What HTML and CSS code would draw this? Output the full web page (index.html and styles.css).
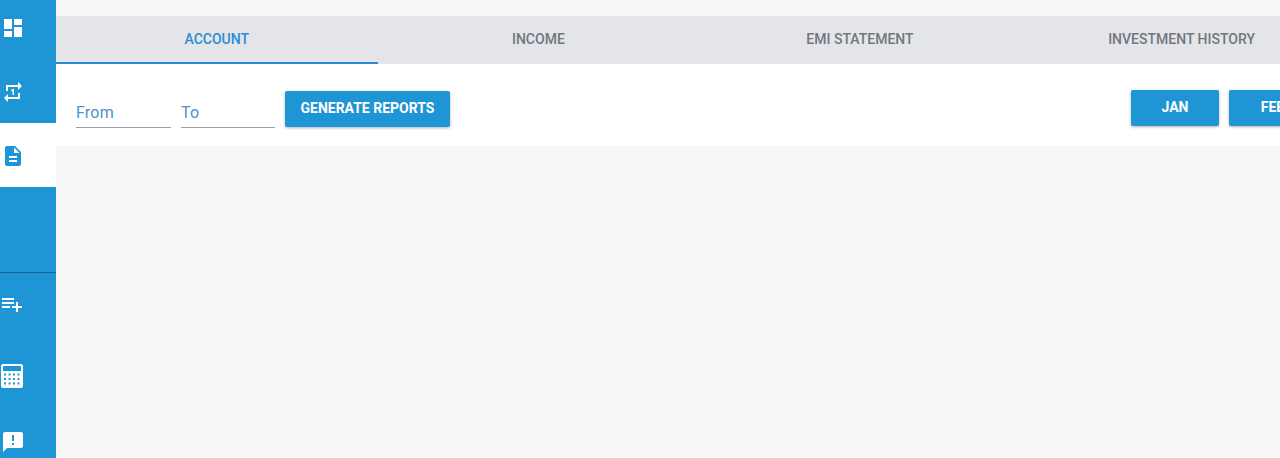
FILE: index.html
```html
<!DOCTYPE html>
<html lang="en">
<head>
    <meta charset="UTF-8">
    <meta name="viewport" content="width=device-width, initial-scale=1.0">
    <title>Reports</title>
    <link rel="stylesheet" href="styles.css">
</head>
<body>
    <div class="app">
        <nav class="sidebar">
            <div class="nav-top">
                <a class="nav-item">
                    <svg class="nav-icon" viewBox="0 0 24 24"><path d="M3 13h8V3H3v10zm0 8h8v-6H3v6zm10 0h8V11h-8v10zm0-18v6h8V3h-8z"/></svg>
                </a>
                <a class="nav-item">
                    <svg class="nav-icon" viewBox="0 0 24 24"><path d="M7 7h10v3l4-4-4-4v3H5v6h2V7zm10 10H7v-3l-4 4 4 4v-3h12v-6h-2v4zm-4-2V9h-1l-2 1v1h1.5v4H13z"/></svg>
                </a>
                <a class="nav-item active">
                    <svg class="nav-icon" viewBox="0 0 24 24"><path d="M14 2H6c-1.1 0-1.99.9-1.99 2L4 20c0 1.1.89 2 1.99 2H18c1.1 0 2-.9 2-2V8l-6-6zm2 16H8v-2h8v2zm0-4H8v-2h8v2zm-3-5V3.5L18.5 9H13z"/></svg>
                </a>
            </div>
            <div class="nav-bottom">
                <a class="nav-item playlist">
                    <svg class="nav-icon" viewBox="0 0 24 24"><path d="M14 10H2v2h12v-2zm0-4H2v2h12V6zm4 8v-4h-2v4h-4v2h4v4h2v-4h4v-2h-4zM2 16h8v-2H2v2z"/></svg>
                </a>
                <a class="nav-item calc">
                    <svg class="nav-icon" viewBox="0 0 24 24"><path fill-rule="evenodd" d="M3 0h18a2 2 0 0 1 2 2v20a2 2 0 0 1-2 2H3a2 2 0 0 1-2-2V2a2 2 0 0 1 2-2zm0 2v5h18V2H3zm1 7.500v2h2v-2H4zm4.500 0v2h2v-2h-2zm4.500 0v2h2v-2h-2zm4.500 0v2h2v-2h-2zM4 14v2h2v-2H4zm4.500 0v2h2v-2h-2zm4.500 0v2h2v-2h-2zm4.500 0v2h2v-2h-2zM4 18.500v2h2v-2H4zm4.500 0v2h2v-2h-2zm4.500 0v2h2v-2h-2zm4.500 0v2h2v-2h-2z"/></svg>
                </a>
                <a class="nav-item feedback">
                    <svg class="nav-icon" viewBox="0 0 24 24"><path d="M20 2H4c-1.1 0-1.99.9-1.99 2L2 22l4-4h14c1.1 0 2-.9 2-2V4c0-1.1-.9-2-2-2zm-7 9h-2V5h2v6zm0 4h-2v-2h2v2z"/></svg>
                </a>
            </div>
        </nav>

        <main class="content">
            <div class="tabs">
                <div class="tab active">ACCOUNT</div>
                <div class="tab">INCOME</div>
                <div class="tab">EMI STATEMENT</div>
                <div class="tab">INVESTMENT HISTORY</div>
            </div>
            <div class="toolbar">
                <div class="range">
                    <div class="field from">From</div>
                    <div class="field to">To</div>
                    <button class="btn btn-generate">GENERATE REPORTS</button>
                </div>
                <div class="months">
                    <button class="btn btn-month">JAN</button>
                    <button class="btn btn-month">FEB</button>
                </div>
            </div>
        </main>
    </div>
</body>
</html>
```

FILE: styles.css
```css
* {
    box-sizing: border-box;
    margin: 0;
    padding: 0;
}
html, body {
    height: 100%;
    overflow: hidden;
    font-family: Roboto, "Liberation Sans", sans-serif;
    background-color: #f6f6f6;
}
.app {
    display: flex;
    height: 100%;
}
.sidebar {
    flex: 0 0 56px;
    background: #1e95d4;
    overflow: hidden;
}
.nav-top {
    margin-top: -5px;
    height: 278px;
    border-bottom: 1px solid #14618c;
}
.nav-top .nav-item {
    padding-top: 2px;
}
.nav-item {
    display: flex;
    align-items: center;
    height: 64px;
    padding-left: 1px;
    fill: #fff;
}
.nav-item.active {
    background: #fff;
    fill: #1e95d4;
}
.nav-icon {
    width: 24px;
    height: 24px;
    display: block;
}
.playlist {
    height: 62px;
    padding-left: 0;
}
.calc {
    margin-top: 9px;
    padding-left: 0;
}
.feedback {
    margin-top: 2px;
}
.content {
    flex: 1;
    min-width: 0;
    padding-top: 16px;
}
.tabs {
    display: flex;
    width: 1288px;
    height: 48px;
    background: #e4e5e9;
}
.tab {
    flex: 0 0 321.6px;
    display: flex;
    align-items: center;
    justify-content: center;
    font-size: 14px;
    font-weight: 500;
    color: #6f7780;
    padding-bottom: 2px;
}
.tab.active {
    color: #2b8cd0;
    border-bottom: 2px solid #2b8cd0;
    padding-bottom: 0;
}
.toolbar {
    display: flex;
    justify-content: space-between;
    height: 82px;
    background: #fff;
    padding-left: 20px;
}
.range {
    display: flex;
    align-items: flex-start;
}
.field {
    height: 37px;
    margin-top: 27px;
    padding-top: 12px;
    font-size: 16px;
    line-height: 19px;
    letter-spacing: 0.2px;
    color: #5290c6;
    border-bottom: 1px solid #9a9ea6;
}
.from {
    width: 95px;
    margin-right: 10px;
}
.to {
    width: 94px;
    margin-right: 10px;
}
.btn {
    height: 36px;
    border: none;
    border-radius: 2px;
    background: #1e95d4;
    color: #fff;
    font-family: inherit;
    font-size: 14px;
    font-weight: 700;
    box-shadow: 0 1px 3px rgba(0, 0, 0, 0.3);
}
.btn-generate {
    width: 165px;
    margin-top: 27px;
    padding-bottom: 2px;
}
.months {
    display: flex;
    flex: 0 0 auto;
    gap: 10px;
    margin-right: -37px;
    padding-top: 26px;
}
.btn-month {
    width: 88px;
    padding-bottom: 2px;
}
```
